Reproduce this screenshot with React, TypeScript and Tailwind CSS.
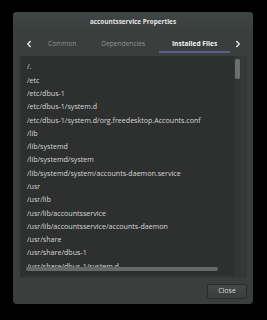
import { ChevronLeft, ChevronRight } from "lucide-react";

const files = [
  "/.",
  "/etc",
  "/etc/dbus-1",
  "/etc/dbus-1/system.d",
  "/etc/dbus-1/system.d/org.freedesktop.Accounts.conf",
  "/lib",
  "/lib/systemd",
  "/lib/systemd/system",
  "/lib/systemd/system/accounts-daemon.service",
  "/usr",
  "/usr/lib",
  "/usr/lib/accountsservice",
  "/usr/lib/accountsservice/accounts-daemon",
  "/usr/share",
  "/usr/share/dbus-1",
  "/usr/share/dbus-1/system.d",
];

export default function App() {
  return (
    <div className="h-[320px] w-[267px] overflow-hidden bg-black pl-[13px] pt-[12px] font-['Open_Sans',sans-serif]">
      <div className="flex h-[292px] w-[240px] flex-col rounded-[4px] bg-[#3a3e3d] shadow-[inset_0_1px_0_rgba(255,255,255,0.08)]">
        {/* title */}
        <div className="flex h-[18px] items-center justify-center rounded-t-[4px] bg-[linear-gradient(180deg,#404645_0%,#3b403f_100%)] pt-[1px] text-[6.4px] font-bold text-[#e2e4e3]">
          accountsservice Properties
        </div>

        {/* tabs */}
        <div className="flex h-[23px] items-center pt-[4px] text-[6.6px]">
          <ChevronLeft className="ml-[11px] h-[10px] w-[10px] text-[#e6e8e7]" strokeWidth={3.5} />
          <span className="ml-[14px] text-[#8f9493]">Common</span>
          <span className="ml-[25px] text-[#8f9493]">Dependencies</span>
          <div className="relative ml-[14px] flex h-full w-[71px] items-center justify-center">
            <span className="font-bold text-[#f2f2f2]">Installed Files</span>
            <div className="absolute bottom-0 left-0 right-0 h-[2px] bg-[#56608a]" />
          </div>
          <ChevronRight className="ml-[3px] h-[10px] w-[10px] text-[#e6e8e7]" strokeWidth={3.5} />
        </div>

        {/* list */}
        <div className="ml-[7px] mt-[3px] flex h-[222px] w-[227px] border-b-[2px] border-r-[6px] border-[#343837]">
          <div className="relative flex-1 overflow-hidden bg-[#2e2f2f]">
            <div className="flex flex-col pl-[7px] pt-[4px]">
              {files.map((f) => (
                <div
                  key={f}
                  className="flex h-[13.3px] items-center whitespace-nowrap text-[7.1px] text-[#d6d8d7]"
                >
                  {f}
                </div>
              ))}
            </div>
            {/* horizontal scrollbar */}
            <div className="absolute bottom-[3px] left-0 right-[7px] h-[8px]">
              <div className="ml-[6px] mt-[2px] h-[4px] w-[192px] rounded-[2px] bg-[#656a69]" />
            </div>
            {/* vertical scrollbar */}
            <div className="absolute bottom-0 right-0 top-0 w-[7px] bg-[#333636]">
              <div className="ml-[1px] mt-[3px] h-[20px] w-[5px] rounded-[2px] bg-[#6b706f]" />
            </div>
          </div>
        </div>

        {/* footer */}
        <div className="flex flex-1 items-start justify-end pr-[6px] pt-[6px]">
          <button className="flex h-[15px] w-[40px] items-center justify-center rounded-[2px] border border-[#2a2d2c] bg-[linear-gradient(180deg,#444948_0%,#3a3f3e_100%)] text-[7px] text-[#d8dad9]">
            Close
          </button>
        </div>
      </div>
    </div>
  );
}
